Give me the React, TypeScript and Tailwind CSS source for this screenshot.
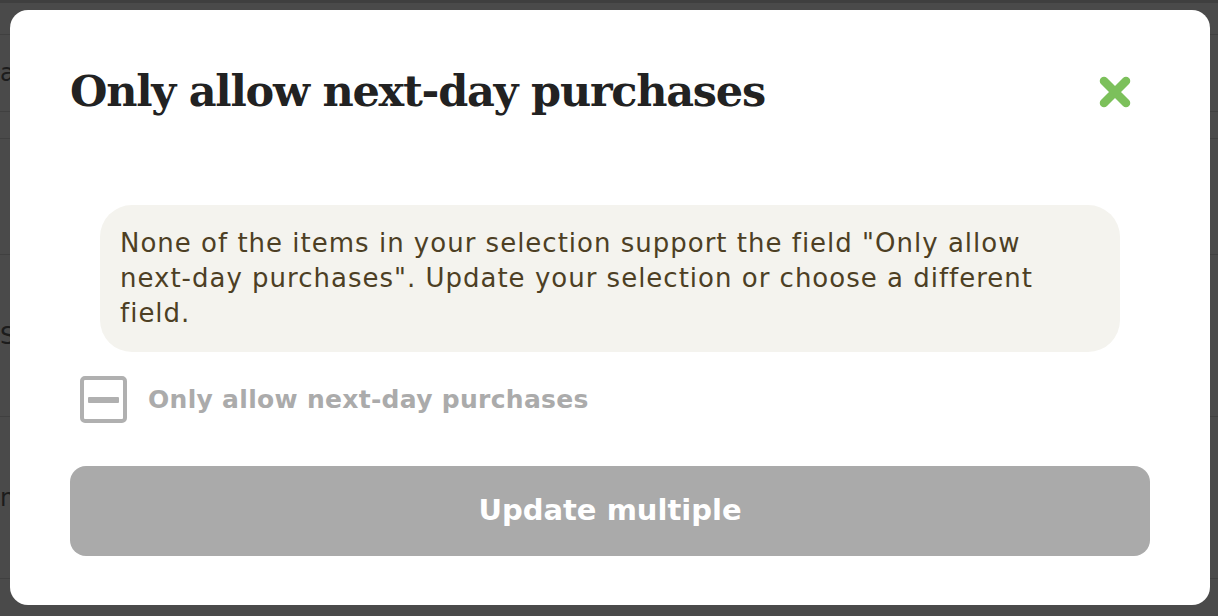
import React from "react";

const bgRows = [
  { h: "h-[32px]", text: "" },
  { h: "h-[77px]", text: "a" },
  { h: "h-[27px]", text: "" },
  { h: "h-[116px]", text: "" },
  { h: "h-[162px]", text: "S" },
  { h: "h-[162px]", text: "n" },
];

function CloseIcon() {
  return (
    <svg width="34" height="34" viewBox="0 0 34 34" aria-hidden="true">
      <path
        d="M6 6 L28 28 M28 6 L6 28"
        stroke="#7cc05b"
        strokeWidth="8.5"
        strokeLinecap="round"
        fill="none"
      />
    </svg>
  );
}

export default function App() {
  return (
    <div className="relative h-[616px] w-full overflow-hidden bg-[#4a4a4a] font-['DejaVu_Sans',sans-serif]">
      {/* page behind the overlay */}
      <div className="border-t-[3px] border-[#3f3f3f]">
        {bgRows.map((r, i) => (
          <div
            key={i}
            className={`${r.h} flex items-center border-b border-[#404040] text-[24px] text-[#1c1c1c]`}
          >
            {r.text}
          </div>
        ))}
      </div>

      {/* modal */}
      <div className="absolute inset-0 flex items-start pl-[10px] pt-[10px]">
        <div className="flex h-[595px] w-[1200px] flex-col rounded-[18px] bg-white px-[60px] pt-[52px]">
          <div className="flex items-center justify-between">
            <h1 className="font-['DejaVu_Serif',serif] text-[43px] font-bold leading-[58px] tracking-[-1.25px] text-[#222222]">
              Only allow next-day purchases
            </h1>
            <button className="mr-[18px] mt-[2px] flex items-center justify-center">
              <CloseIcon />
            </button>
          </div>

          <div className="mx-[30px] mt-[85px] rounded-[32px] bg-[#f4f3ee] px-[20px] py-[21px] text-[26px] leading-[35px] tracking-[1px] text-[#4d3f24]">
            None of the items in your selection support the field "Only allow next-day purchases". Update your selection or choose a different field.
          </div>

          <label className="mt-[24px] ml-[10px] flex items-center gap-[21px]">
            <span className="flex h-[47px] w-[47px] items-center justify-center rounded-[5px] border-[4px] border-[#b0b0b0]">
              <span className="h-[6px] w-[31px] rounded-[1px] bg-[#b0b0b0]" />
            </span>
            <span className="text-[25px] font-semibold tracking-[0.3px] text-[#ababab]">
              Only allow next-day purchases
            </span>
          </label>

          <button className="mt-[43px] flex h-[90px] w-full items-center justify-center rounded-[16px] bg-[#aaaaaa] text-[29px] font-semibold text-white">
            Update multiple
          </button>
        </div>
      </div>
    </div>
  );
}
